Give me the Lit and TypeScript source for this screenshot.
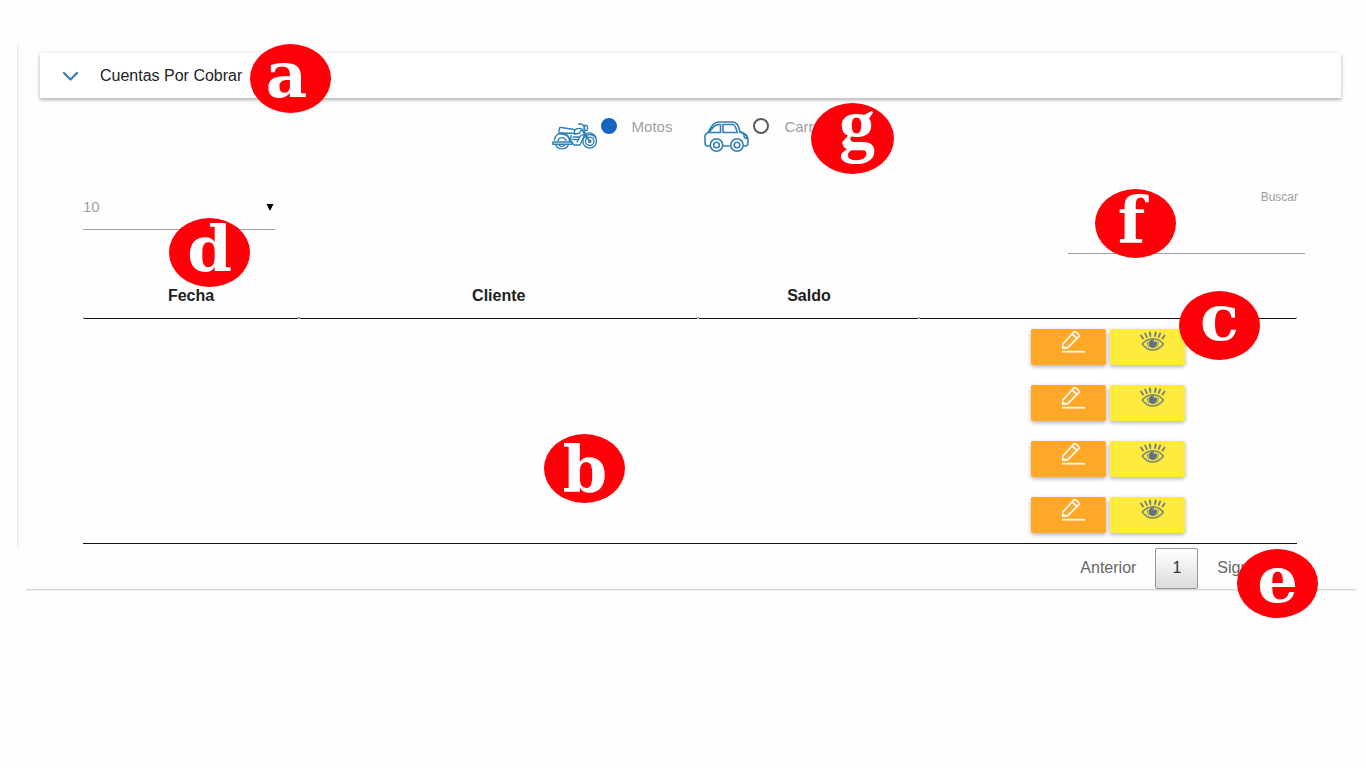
import { LitElement, html, css } from "lit";
import { customElement, property, state } from "lit/decorators.js";

@customElement("callout-mark")
class CalloutMark extends LitElement {
  static styles = css`
    :host {
      position: absolute;
      z-index: 2;
      box-sizing: border-box;
      width: 81px;
      height: 69px;
      border-radius: 50%;
      background: #ff0008;
      color: #fff;
      display: flex;
      justify-content: center;
      align-items: center;
      font: bold 64px/64px "DejaVu Serif", serif;
      pointer-events: none;
      padding-bottom: 8px;
    }
    :host([level="low"]) {
      padding-bottom: 0;
    }
    :host([level="high"]) {
      padding-bottom: 16px;
    }
    :host([level="descender"]) {
      padding-bottom: 28px;
      font: bold 72px/72px "Liberation Serif", serif;
    }
    :host([side="left"]) {
      padding-right: 8px;
    }
    :host([side="right"]) {
      padding-left: 8px;
    }
  `;
  @property() letter = "";
  render() {
    return html`<span>${this.letter}</span>`;
  }
}

@customElement("app-root")
class AppRoot extends LitElement {
  static styles = css`
    :host {
      display: block;
      min-height: 100vh;
      box-sizing: border-box;
      padding-top: 44px;
      background: #fefefe;
      color: #212121;
      font: 16px/24px "Liberation Sans", Arial, sans-serif;
    }
    * {
      box-sizing: border-box;
    }
    .panel {
      margin-left: 17px;
      padding: 9px 25px 4px 22px;
      border-left: 1px solid #e6e6e6;
      box-shadow: inset 2px 0 1px #f8f8f8;
    }
    .heading {
      position: relative;
      display: flex;
      align-items: center;
      height: 45px;
      padding: 0 22px;
      gap: 21px;
      background: #fff;
      box-shadow: 0 2px 3px rgba(0, 0, 0, 0.22), 0 1px 6px rgba(0, 0, 0, 0.12);
    }
    .heading h1 {
      margin: 0;
      font: inherit;
    }
    .chevron {
      width: 17px;
      height: 12px;
    }
    .kinds {
      display: flex;
      justify-content: center;
      gap: 32px;
      margin: 20px 0 32px;
      padding: 0;
      border: 0;
      height: 34px;
    }
    .kind {
      position: relative;
      display: flex;
      align-items: flex-start;
      color: #9e9e9e;
      font-size: 15px;
      line-height: 18px;
    }
    .kind svg {
      width: 45px;
      height: 31px;
      margin: 3px 4px 0 0;
    }
    .kind input {
      appearance: none;
      width: 16px;
      height: 16px;
      margin: 0 15px 0 0;
      border: 2px solid #5a5a5a;
      border-radius: 50%;
    }
    .kind input:checked {
      border-color: #1565c0;
      background: #1565c0;
    }
    .name {
      position: relative;
    }
    .content {
      padding: 0 36px 0 43px;
    }
    .controls {
      display: flex;
      justify-content: space-between;
      align-items: flex-start;
      margin-bottom: 19px;
    }
    .length {
      position: relative;
      display: grid;
      align-items: center;
      width: 192px;
    }
    .length select,
    .search input {
      border: 0;
      border-bottom: 1px solid #9e9e9e;
      border-radius: 0;
      background: transparent;
      outline: 0;
      font: inherit;
      width: 100%;
      padding: 0;
    }
    .length select {
      grid-area: 1 / 1;
      appearance: none;
      height: 46px;
      color: #9e9e9e;
      font-size: 15px;
    }
    .arrow {
      grid-area: 1 / 1;
      justify-self: end;
      width: 8px;
      height: 7px;
      margin-right: 1px;
      pointer-events: none;
    }
    .search {
      position: relative;
      width: 237px;
    }
    .search label {
      display: block;
      padding-right: 7px;
      text-align: right;
      color: #9e9e9e;
      font-size: 12px;
      line-height: 26px;
    }
    .search input {
      display: block;
      height: 44px;
    }
    .records {
      position: relative;
      margin-right: 8px;
    }
    table {
      width: 100%;
      table-layout: fixed;
      border-collapse: separate;
      border-spacing: 0;
      border-bottom: 1px solid #111;
    }
    th {
      height: 46px;
      padding: 0 18px;
      border-bottom: 1px solid #111;
      border-radius: 2px;
      text-align: center;
    }
    .date {
      width: 17.8%;
    }
    .client {
      width: 32.9%;
    }
    .balance {
      width: 18.2%;
    }
    td {
      height: 56px;
      padding: 0;
    }
    .actions {
      display: flex;
      justify-content: center;
      gap: 4px;
    }
    .actions button {
      width: 75px;
      height: 36px;
      padding: 0 15px 12px 30px;
      border: 0;
      border-radius: 2px;
      background: #ffa726;
      box-shadow: 0 2px 4px rgba(0, 0, 0, 0.22), 0 1px 4px rgba(0, 0, 0, 0.1);
    }
    .actions .view {
      background: #ffeb3b;
    }
    .actions svg {
      display: block;
      width: 26px;
      height: 24px;
    }
    .pages {
      position: relative;
      display: flex;
      justify-content: flex-end;
      gap: 2px;
      margin: 0 10px 0 26px;
      padding-right: 55px;
      border-bottom: 1px solid #d6d6d6;
      box-shadow: 0 1px 1px #eee;
    }
    .pages button {
      height: 41px;
      padding: 0 16px 2px;
      border: 1px solid transparent;
      border-radius: 2px;
      background: none;
      color: #666;
      font: inherit;
    }
    .pages .current {
      border-color: #979797;
      background: linear-gradient(#fff, #dcdcdc);
      color: #333;
    }
    .mark-a {
      left: 210px;
      top: -9px;
    }
    .mark-b {
      left: 38%;
      top: 161px;
    }
    .mark-c {
      right: 37px;
      top: 18px;
    }
    .mark-d {
      left: 86px;
      top: 34px;
    }
    .mark-e {
      right: 38px;
      top: 1px;
    }
    .mark-f {
      left: 27px;
      top: 5px;
    }
    .mark-g {
      left: 27px;
      top: -15px;
      width: 83px;
      height: 71px;
    }
  `;

  @state() kind = "motos";
  rows = [1, 2, 3, 4];

  moto = html`<svg viewBox="0 0 45 31" fill="none" stroke="#3180b5" stroke-width="1.400" stroke-linecap="round" stroke-linejoin="round" aria-hidden="true">
    <circle cx="37.700" cy="20.300" r="6.800" /><circle cx="37.700" cy="20.300" r="4.200" /><circle cx="37.700" cy="20.300" r="1.200" />
    <path d="M3.500 23.500a7 7 0 0 0 13 0M6.500 23.500a4 4 0 0 0 7 0M.8 21h19v2.300H.8zM2.500 19a7.500 7.500 0 0 1 15 1M6 19.500a4.200 4.200 0 0 1 8 0" />
    <path d="M7.500 7.500q0-1.500 2-1l11 1.700 2 1v3H8.500q-2.500-.8-1-4.700zM7 12.500 14 14l4 4M22.500 9.500c2-2.300 4.500-2.800 7.500-1.300l-2.500 4-5 1M19 14.500l-.5 5 3.500 4.500h6l5-11M21 16h6M20.500 18.500h5.500M29 14l-4 7M32 10l5.500 10M30 8.500l5 9.500" />
    <path d="M26.500 3h3l3 2.500V9M32 4.500h3q1.500 2.500 0 5h-3zM30.500 14.500c3-3.500 10-4 13.300 1.500" />
  </svg>`;

  car = html`<svg viewBox="0 0 45 31" fill="none" stroke="#3180b5" stroke-width="1.600" stroke-linecap="round" stroke-linejoin="round" aria-hidden="true">
    <path d="M6 25H3q-2-.5-2-3v-7q0-2 3-3.500C8 4 10 1 15 1h13c5 0 6 3 8 9.500 5 2 8 4 8 8V22q0 3-3 3h-1M18.500 25h7" />
    <path d="M5 11.500C9 6 11 3.500 15 3.500h1.500v8zM19 3.500h10c2 0 3 4 4.500 8H19zM36 11l4 2M40 13c2 0 3 2 3.500 4-2 1-4-.5-3.500-4z" />
    <circle cx="12.500" cy="24" r="6.200" /><circle cx="12.500" cy="24" r="2.800" />
    <circle cx="33" cy="24" r="6.200" /><circle cx="33" cy="24" r="2.800" />
  </svg>`;

  pencil = html`<svg viewBox="0 0 26 24" fill="none" stroke="#fff8ee" stroke-width="1.800" stroke-linejoin="round" aria-hidden="true">
    <path d="M1.500 19 2 14.800 12.800 3q1-1 2 0l3 2.700q1 1 0 2L7 18.500zM11 5l4.800 4.500" />
    <path d="M1 22.700h23" />
  </svg>`;

  eye = html`<svg viewBox="0 0 26 24" fill="none" stroke="#7c877c" stroke-width="1.500" stroke-linecap="round" aria-hidden="true">
    <path d="M2.200 15Q7 9.800 12.800 9.800T23.400 15Q19 21 12.800 21T2.200 15z" />
    <circle cx="12.800" cy="14.800" r="4.200" fill="#607089" stroke="none" />
    <path d="M7.500 13q-1 3 1.200 5M18.200 13q1 3-1.200 5" stroke-width="1" />
    <path d="m1 6.500 2 3M5.200 4.500l1.600 3.500M9.800 3.500l.7 3.500M15.700 3.500 15 7M20.200 4.500l-1.500 3.500M24.500 6.500l-2 3" stroke="#6b7a83" stroke-width="1.800" />
    <circle cx="14.500" cy="12" r="1" fill="#ffeb3b" stroke="none" />
  </svg>`;

  render() {
    return html`
      <section class="panel">
        <header class="heading">
          <svg class="chevron" viewBox="0 0 17 12" fill="none" stroke="#3c82b8" stroke-width="2.400" stroke-linecap="round" stroke-linejoin="round" aria-hidden="true"><path d="m2 3 6.500 6.500L15 3" /></svg>
          <h1>Cuentas Por Cobrar</h1>
          <callout-mark class="mark-a" letter="a" side="left"></callout-mark>
        </header>
        <fieldset class="kinds">
          <label class="kind">
            ${this.moto}
            <input type="radio" name="kind" .checked=${this.kind === "motos"} @change=${() => (this.kind = "motos")} />
            <span class="name">Motos</span>
          </label>
          <label class="kind">
            ${this.car}
            <input type="radio" name="kind" .checked=${this.kind === "carros"} @change=${() => (this.kind = "carros")} />
            <span class="name">Carros<callout-mark class="mark-g" letter="g" level="descender" side="right"></callout-mark></span>
          </label>
        </fieldset>
        <div class="content">
          <div class="controls">
            <div class="length">
              <select aria-label="Registros por página">
                <option>10</option>
                <option>25</option>
                <option>50</option>
              </select>
              <svg class="arrow" viewBox="0 0 8 7" aria-hidden="true"><path d="M.5 0h7L4 7z" /></svg>
              <callout-mark class="mark-d" letter="d"></callout-mark>
            </div>
            <div class="search">
              <label for="search">Buscar</label>
              <input id="search" type="search" />
              <callout-mark class="mark-f" letter="f" side="left"></callout-mark>
            </div>
          </div>
          <div class="records">
            <table>
              <thead>
                <tr>
                  <th class="date">Fecha</th>
                  <th class="client">Cliente</th>
                  <th class="balance">Saldo</th>
                  <th></th>
                </tr>
              </thead>
              <tbody>
                ${this.rows.map(
                  () => html`<tr>
                    <td></td>
                    <td></td>
                    <td></td>
                    <td>
                      <div class="actions">
                        <button aria-label="Editar">${this.pencil}</button>
                        <button class="view" aria-label="Ver">${this.eye}</button>
                      </div>
                    </td>
                  </tr>`
                )}
              </tbody>
            </table>
            <callout-mark class="mark-b" letter="b" level="low"></callout-mark>
            <callout-mark class="mark-c" letter="c" level="high"></callout-mark>
          </div>
        </div>
      </section>
      <nav class="pages">
        <button>Anterior</button>
        <button class="current">1</button>
        <button>Siguiente</button>
        <callout-mark class="mark-e" letter="e"></callout-mark>
      </nav>
    `;
  }
}
